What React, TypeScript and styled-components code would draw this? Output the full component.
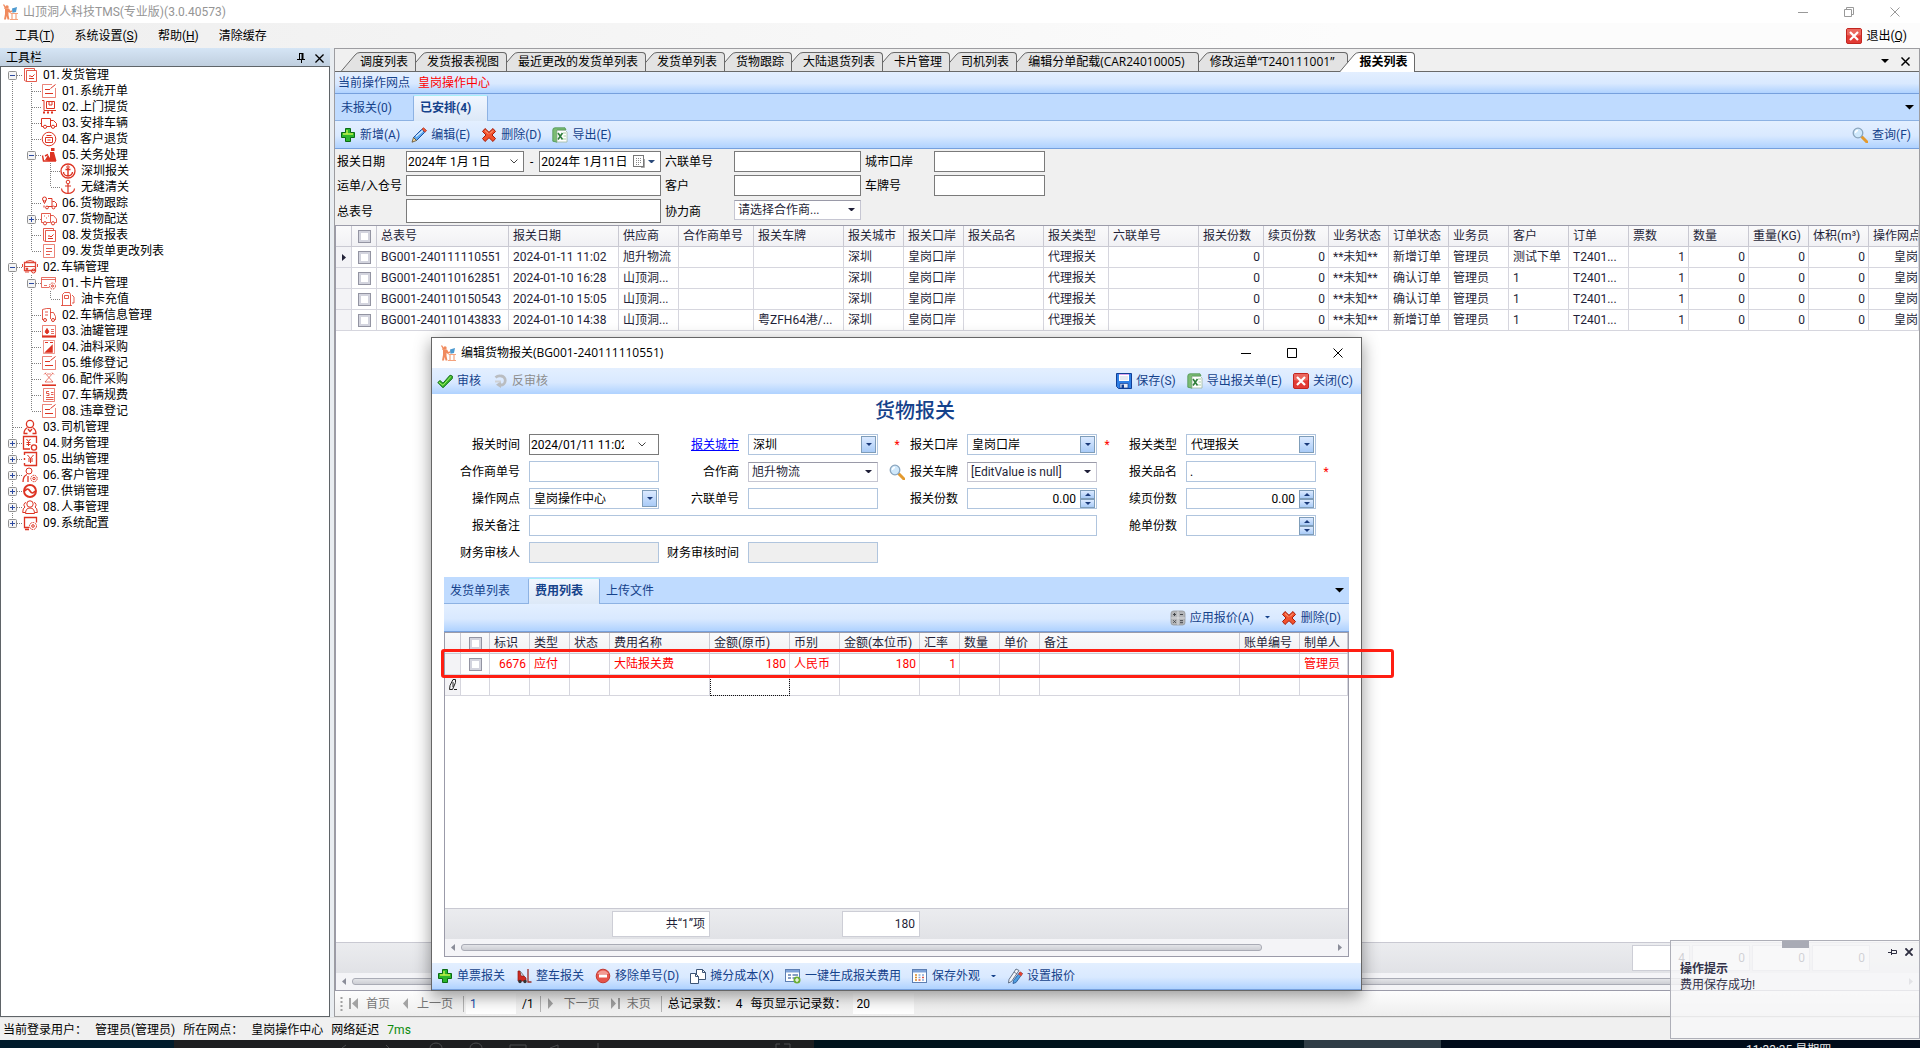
import React from "react";
import styled, { createGlobalStyle, css } from "styled-components";

const RED = "#dd3322";
const INK = "#1f1f38";
const BLUE = "#15428b";
const WIDE = '"Open Sans", "Noto Sans CJK SC", sans-serif';

const GlobalStyle = createGlobalStyle`
  * { box-sizing: border-box; }
  html, body, #root { height: 100%; }
  body {
    margin: 0;
    overflow: hidden;
    background: #f0f0f0;
    color: #000;
    font: 12px/16px Roboto, "Noto Sans CJK SC", sans-serif;
  }
  button, input, select {
    font: inherit;
    color: inherit;
    margin: 0;
    padding: 0;
    border: 0;
    background: none;
    border-radius: 0;
    outline: none;
  }
  h1, h2, h3, p, ul { margin: 0; padding: 0; font-size: 12px; font-weight: 400; }
  ul { list-style: none; }
  svg { display: block; flex: none; }
`;

/* ---------- icons ---------- */

type Drawing = { children: React.ReactNode; size?: number };
const Art = ({ children, size = 16 }: Drawing) => (
  <svg width={size} height={size} viewBox="0 0 16 16" fill="none" aria-hidden="true">
    {children}
  </svg>
);

const Logo = () => (
  <Art>
    <path d="M1.500.500L3 3v2M3 3.500h2" stroke="#f08a5d" strokeWidth="1.300" />
    <circle cx="5" cy="3" r="1.700" fill="#f08a5d" />
    <path d="M3 4.500h4L8.500 7l2-1 .5 1.200L8 9 6.500 8v3l1 4.500H5.500L4.700 12 4 15.500H2L3 10z" fill="#f08a5d" />
    <path d="M10 4.500l5-1.500-1 5-3.500.7z" fill="#4d9ad0" />
    <path d="M8.500 9.500H16M10 10v5M14 10v5M8 15.500h8" stroke="#f4a27d" strokeWidth="1.200" />
  </Art>
);
const Plus = () => (
  <Art>
    <path d="M5.500 1.500h5v4h4v5h-4v4h-5v-4h-4v-5h4z" fill="#2cb52c" stroke="#0b6b12" />
    <path d="M7 3v4H3M7 7h6" stroke="#c5f24a" strokeWidth="1.400" />
  </Art>
);
const Pencil = () => (
  <Art>
    <path d="M10.500 2.500l3 3-8 8-3-3z" fill="#5fa8ef" stroke="#1b4fa0" />
    <path d="M5 9.500l7-6" stroke="#d6ebff" strokeWidth="1.500" />
    <path d="M2.500 10.500l3 3-4.500 1.700z" fill="#f6d9a0" stroke="#5b4a2a" strokeWidth=".8" />
    <path d="M11 2l1.500-1.200 3 2.700L14 5.200z" fill="#ef5a3c" stroke="#b3321d" strokeWidth=".8" />
  </Art>
);
const Cross = () => (
  <Art>
    <path d="M4 1.500l4 3.800 4-3.800 2.500 3L11 8l3.500 3.500-2.500 3-4-3.800-4 3.800-2.500-3L5 8 1.500 4.500z" fill="#f2502c" stroke="#a81c08" />
    <path d="M4 3.500l3.500 3.300M12 3.500L9 6.500" stroke="#ffb08c" />
  </Art>
);
const Excel = () => (
  <Art>
    <path d="M.8 3Q.8.800 3 .8h10l1 2.200H5v12.200l-4.200-1z" fill="#7cbc74" stroke="#4b9450" strokeWidth=".8" />
    <path d="M5 3.500h8.500L15 5v10H5z" fill="#fff" stroke="#9fb7a0" strokeWidth=".8" />
    <path d="M11 6h3M11.500 9H14M11 12h3" stroke="#a5cfa1" />
    <path d="M6 6l4.500 6.500M10.500 6L6 12.500" stroke="#2e7d3a" strokeWidth="1.600" />
  </Art>
);
const Magnifier = () => (
  <Art>
    <path d="M10 10l5 5" stroke="#e39a2f" strokeWidth="3" strokeLinecap="round" />
    <circle cx="6" cy="6" r="4.800" fill="#cfe8fb" stroke="#8aa5bd" strokeWidth="1.300" />
    <path d="M3.500 6A2.500 2.500 0 0 1 6 3.500" stroke="#fff" strokeWidth="1.300" />
  </Art>
);
const CloseRed = () => (
  <Art>
    <rect x=".5" y=".5" width="15" height="15" rx="1.500" fill="#e23b35" stroke="#c22620" />
    <path d="M1 1h14v6Q8 9 1 7z" fill="#f07a70" opacity=".7" />
    <path d="M4 4l8 8M12 4l-8 8" stroke="#fff" strokeWidth="2.200" />
  </Art>
);
const Check = () => (
  <Art>
    <path d="M.8 9.500L3 7.500l3 2.700 7-8 2.300.8v2.500L6 14.800z" fill="#35b52b" stroke="#14701a" />
    <path d="M2 9.300l4 3 8-9" stroke="#a6ef62" />
  </Art>
);
const Redo = () => (
  <Art>
    <path d="M3.500 4.500Q6 2.300 9 3a4.500 4.500 0 0 1-.5 9" stroke="#babdc1" strokeWidth="2.800" />
    <path d="M9 8v7l-5-3.300z" fill="#babdc1" />
    <path d="M3 8.500h6" stroke="#cfd1d4" strokeWidth="2" />
  </Art>
);
const Save = () => (
  <Art>
    <path d="M.5.500h15v15h-13l-2-2z" fill="#2f7fe6" stroke="#123f96" />
    <path d="M3 1h10v7H3z" fill="#fff" />
    <path d="M3 1.500h10" stroke="#d9a2ee" />
    <path d="M4 4h8M4 6h8" stroke="#c9d2e4" />
    <path d="M4 10.500h8V15H4z" fill="#e8ecf5" stroke="#123f96" strokeWidth=".7" />
    <path d="M5.500 11.500h2.500V15H5.500z" fill="#123f96" />
  </Art>
);
const Calc = () => (
  <Art>
    <rect x="1" y="1" width="14" height="14" rx="2.500" fill="#b4b6b9" stroke="#8d9094" strokeWidth=".7" />
    <path d="M8 1v14M1 8h14" stroke="#e4e5e7" strokeWidth=".8" />
    <path d="M3 4.500h3M4.500 3v3M10 4.500h3M3.300 10.300l2.500 2.500M5.800 10.300l-2.500 2.500M10 10.700h3M10 12.700h3" stroke="#43464a" />
  </Art>
);
const Forklift = () => (
  <Art>
    <path d="M2 3h2l1 5h3l2 2v3H2z" fill="#cf2a22" stroke="#8a1812" strokeWidth=".7" />
    <circle cx="4" cy="13.500" r="1.700" fill="#333" />
    <circle cx="9" cy="13.500" r="1.700" fill="#333" />
    <path d="M12 1v13h3.500" stroke="#9b2d27" strokeWidth="1.300" />
    <path d="M4 3l4 5" stroke="#777" />
  </Art>
);
const Minus = () => (
  <Art>
    <circle cx="8" cy="8" r="6.800" fill="#e5534a" stroke="#c13a33" />
    <path d="M2.500 6a6 6 0 0 1 11 0z" fill="#f39a92" />
    <rect x="4" y="6.500" width="8" height="3" fill="#fff" />
  </Art>
);
const Copy = () => (
  <Art>
    <path d="M6.500 1.500h6l3 3v7h-9z" fill="#fff" stroke="#3c5475" />
    <path d="M12.500 1.500v3h3" stroke="#3c5475" />
    <path d="M.5 5.500h5l3 3v7h-8z" fill="#fff" stroke="#3c5475" />
    <path d="M5.500 5.500v3h3" stroke="#3c5475" />
  </Art>
);
const FormAdd = () => (
  <Art>
    <rect x=".5" y="1.500" width="14" height="12" fill="#fff" stroke="#5d7fb3" />
    <path d="M1 2h13v2.500H1z" fill="#7ea2d8" />
    <path d="M3 7h3M3 10h3M7.500 7H13M7.500 10H11" stroke="#5d7fb3" strokeWidth="1.300" />
    <circle cx="12" cy="12" r="3.500" fill="#6cae35" />
    <path d="M12 10v4M10 12h4" stroke="#fff" strokeWidth="1.200" />
  </Art>
);
const Layout = () => (
  <Art>
    <rect x=".5" y="1.500" width="14" height="13" fill="#fff" stroke="#5d7fb3" />
    <path d="M1 2h13v2.500H1z" fill="#7ea2d8" />
    <path d="M3 7h2M3 9.500h2M3 12h2" stroke="#d98b2b" strokeWidth="1.500" />
    <path d="M6.500 7h2M6.500 9.500h2M10 7h2M10 12h2" stroke="#88a8d6" strokeWidth="1.500" />
    <path d="M10 9.500h2M6.500 12h2" stroke="#d9564c" strokeWidth="1.500" />
  </Art>
);
const Pens = () => (
  <Art>
    <path d="M9 1l3 1.500-7.500 11-3 1.500.5-3.500z" fill="#f2f4f8" stroke="#56657c" strokeWidth=".9" />
    <path d="M7 4l3 2" stroke="#56657c" strokeWidth=".8" />
    <path d="M13 4l2.500 1.500-6.500 9L6 15.500l.5-3z" fill="#4f9fe0" stroke="#2c5c9a" strokeWidth=".9" />
    <path d="M13 3.500l2.800 2-1.600 2.800-3-2z" fill="#e2452f" />
  </Art>
);

const Caret = ({ w = 8, color = "#000" }: { w?: number; color?: string }) => (
  <svg width={w} height={w / 2} viewBox="0 0 8 4" aria-hidden="true">
    <path d="M0 0h8L4 4z" fill={color} />
  </svg>
);
const CaretUp = () => (
  <svg width="6" height="3" viewBox="0 0 6 3" aria-hidden="true">
    <path d="M0 3h6L3 0z" fill="#1a3a7a" />
  </svg>
);
const Chevron = () => (
  <svg width="8" height="5" viewBox="0 0 8 5" fill="none" stroke="#444" aria-hidden="true">
    <path d="M.5.500L4 4 7.500.500" />
  </svg>
);
const XMark = ({ size = 9, color = "#000", weight = 1 }: { size?: number; color?: string; weight?: number }) => (
  <svg width={size} height={size} viewBox="0 0 10 10" fill="none" stroke={color} strokeWidth={weight} aria-hidden="true">
    <path d="M.5.500l9 9M9.500.500l-9 9" />
  </svg>
);
const Pin = () => (
  <svg width="9" height="10" viewBox="0 0 9 10" fill="none" stroke="#000" aria-hidden="true">
    <path d="M2.500 0v6M2 .5h4M0 6.500h8M4.500 6v4" />
    <path d="M5.500 0v6" strokeWidth="2" />
  </svg>
);
const PinSide = () => (
  <svg width="9" height="8" viewBox="0 0 9 8" fill="none" stroke="#2e2e40" aria-hidden="true">
    <path d="M0 4.500h3M3.500 1v6M3 2.500h5.500v3H3" />
  </svg>
);
const Minimise = ({ color = "#000" }) => (
  <svg width="10" height="10" stroke={color} aria-hidden="true"><path d="M0 5.500h10" /></svg>
);
const Maximise = () => (
  <svg width="10" height="10" fill="none" stroke="#000" aria-hidden="true"><path d="M.5.500h9v9h-9z" /></svg>
);
const Restore = () => (
  <svg width="10" height="10" fill="none" stroke="#999" aria-hidden="true">
    <path d="M.5 2.500h7v7h-7zM2.500 2V.500h7v7H8" />
  </svg>
);

const treeArt: Record<string, React.ReactNode> = {
  report: <><path d="M2.500 1.500h10v2M2.500 1.500v12l2 1" opacity=".8" /><path d="M4.500 3.500h10v11h-10z" opacity=".8" /><path d="M7 9h2l1 1 2.500-2.500M7 11.500h5" /></>,
  form: <><path d="M11 1.500H1.500v13h13V5" opacity=".6" /><path d="M4 6.500h5M4 10.500h8M9.500 5.500l5-4" /></>,
  dolly: <><path d="M1 1.500h2v10h12" /><path d="M5.500 2.500h8v7h-8zM8 3v3h3V3" /><path d="M2 13.500h12" strokeDasharray="2 2" strokeWidth="2" /></>,
  truck: <><path d="M.5 3.500h9v8H6M2 11.500H.5v-8M9.500 5.500h3l3 3v3H14" /><circle cx="4" cy="11.800" r="1.600" /><circle cx="12" cy="11.800" r="1.600" /></>,
  returned: <><circle cx="8" cy="8" r="6.800" /><path d="M4.500 6.500h7v5h-7zM5.500 4.500h5M6.500 9h3" /></>,
  customs: <><path d="M10 1h3.500v3H10z" fill={RED} stroke="none" /><path d="M9 5h4l2.500 9H8l-4-1 3-5 2 3z" fill={RED} stroke="none" /><path d="M1.500 8.500l1 5.500H15" strokeWidth="1.400" /><path d="M4 9l3-1.500" strokeWidth="1.400" /></>,
  anchorRing: <><circle cx="8" cy="8" r="7" strokeWidth="1.300" /><circle cx="8" cy="4" r="1.200" /><path d="M8 5v8M5.500 6.500h5M3.500 9a4.500 4 0 0 0 9 0" strokeWidth="1.400" /></>,
  anchor: <><circle cx="8" cy="3" r="1.800" /><path d="M8 5v9.500M5 7h6M1.500 9.500a6.500 5 0 0 0 13 0" strokeWidth="1.200" /></>,
  truckPin: <><circle cx="3.500" cy="4" r="2" /><path d="M2 5.500l1.500 3 1.500-3M7 3.500h4v8H7M3 10.500v2M11.500 6.500h2l2 2v3H14" /><circle cx="6" cy="12.500" r="1.400" /><circle cx="12.500" cy="12.500" r="1.400" /></>,
  truckBox: <><path d="M.5 2.500h9v9H6M2 11.500H.5v-9M9.500 4.500h3l3 3.500v3.500H14M3 5h1M5 7h1M7 5h1" opacity=".8" /><circle cx="4" cy="12.300" r="1.600" /><circle cx="12" cy="12.300" r="1.600" /></>,
  doc: <><path d="M2.500 1.500h11v13h-11z" opacity=".6" /><path d="M5 5.500h6M5 8.500h6M5 11.500h4" opacity=".8" /></>,
  bus: <><path d="M2.500 3.500h11v8h-11z" strokeWidth="1.300" opacity=".9" /><path d="M3 7.500h10M4 2.500Q8 .5 12 2.500M.5 5v3M15.500 5v3M3 13h4" opacity=".9" /><circle cx="5" cy="9.800" r=".8" fill={RED} /><circle cx="11.500" cy="12" r="2" /></>,
  card: <><path d="M8 12.500H.5v-10h14v5M.5 4.500h14M3 10.500h3" opacity=".7" /><circle cx="11.500" cy="11" r="3" strokeDasharray="1.500 1" /><circle cx="11.500" cy="11" r="1" /></>,
  pump: <><path d="M2.500 14.500v-11l2-2h5l1 2v11M1 14.500h11" opacity=".8" /><path d="M4.500 4.500h4v3h-4zM12 4l2 2v6h-2" opacity=".8" /></>,
  truckInfo: <><path d="M1.500 13V2.500l4-1h4V12M9.500 5.500h3l2 4v3.500M4 5h3M4 8h3" opacity=".8" /><circle cx="4" cy="13" r="1.500" /><circle cx="12" cy="13" r="1.500" /></>,
  tank: <><path d="M1.500 2.500h13v11h-13z" opacity=".6" /><path d="M1 13.500h14" strokeWidth="2.200" /><path d="M6 5.500l1.500 2.500a1.700 1.700 0 1 1-3 0z" fill={RED} /><path d="M10 6.500h3M10 8.500h3M10 10.500h3" opacity=".7" /></>,
  fuel: <><path d="M2.500 1.500h11v13h-11z" opacity=".5" /><path d="M5 13l6-6v6z" fill={RED} strokeWidth="1.500" /><path d="M4 3.500h3M9 3.500h3" /></>,
  tools: <><path d="M4 2l8 9M12 2l-8 9M3 3.500l2-2M11 1.500l2 2M6 3h4M4 11h8" opacity=".6" /><path d="M1 14.200h14" strokeWidth="1.600" /></>,
  fee: <><path d="M2.500 1.500h11v13h-11z" opacity=".6" /><path d="M8 4.500H5.500v2H8v2H5.500M10 5.500h2.500M10 7.500h2.500M5 10.500h7.500M5 12.500h7.500" opacity=".8" /></>,
  user: <><circle cx="8" cy="5" r="3.600" strokeWidth="1.300" /><path d="M2 14.500q0-4 3.500-6M14 14.500q0-4-3.500-6M1.500 14.500h4M10.500 14.500h4M6 10l2 2.500 2-2.500" strokeWidth="1.300" /></>,
  money: <><path d="M8 14H1.500V1.500h13V8" strokeWidth="1.300" /><path d="M4.500 4l2 2.500L8.500 4M6.500 6.500V11M4.500 7.500h4M4.500 9.500h4" /><circle cx="12" cy="12.500" r="2.600" strokeWidth="1.300" /></>,
  yen: <><path d="M2.500 14.500V12M2.500 9V7M2.500 4V1.500h12v13h-12" strokeWidth="1.400" /><path d="M5.500 4l3 3.500 3-3.500M8.500 7.500V12M6 8h5M6 10h5" /></>,
  client: <><circle cx="7" cy="4" r="3" /><path d="M1 15q0-6 4-7.500M6 9v6" strokeWidth="1.300" /><circle cx="12" cy="11.500" r="3.200" strokeDasharray="1.500 .7" /><circle cx="12" cy="11.500" r="1.200" /></>,
  link: <><circle cx="8" cy="8" r="6" strokeWidth="1.900" /><path d="M3 8q2.500-4 5 0t5 0" strokeWidth="1.700" /></>,
  staff: <><circle cx="8" cy="5" r="3.200" /><path d="M3.500 14.500q0-5.500 4.500-5.500t4.500 5.500zM4 3.500A2.500 2.500 0 0 0 3 8Q.7 9 .7 13.500H3M12 3.500A2.500 2.500 0 0 1 13 8q2.300 1 2.300 5.500H13" /></>,
  config: <><path d="M7 12.500H2.500v-10h12v5M3 14.500h4" strokeWidth="1.300" /><circle cx="11" cy="11" r="3.500" strokeDasharray="1.800 .8" /><circle cx="11" cy="11" r="1.300" /></>,
};
const TreeIcon = ({ name }: { name: string }) => (
  <Art><g stroke={RED}>{treeArt[name]}</g></Art>
);

/* ---------- shared pieces ---------- */

const Spacer = styled.span`flex: 1;`;

const Strip = styled.div<{ $h: number; $line?: boolean; $text?: boolean }>`
  display: flex;
  align-items: center;
  flex: none;
  gap: ${(p) => (p.$text ? 8 : 11)}px;
  height: ${(p) => p.$h}px;
  padding: 0 8px 0 ${(p) => (p.$text ? 3 : 5)}px;
  background: linear-gradient(#e3efff 0%, #d9e9ff 55%, #afd2ff 100%);
  border-bottom: ${(p) => (p.$line ? "1px solid #76a0dd" : "0")};
  color: ${BLUE};
`;

const ToolBtn = styled.button`
  display: flex;
  align-items: center;
  gap: 4px;
  white-space: nowrap;
  &:disabled { color: #8d8d8d; }
`;

const SubTabs = styled.div`
  display: flex;
  flex: none;
  height: 27px;
  padding-top: 1px;
  background: #bfdbff;
  border-bottom: 1px solid #8db2e3;
  color: ${BLUE};
`;
const SubTab = styled.button<{ $on?: boolean }>`
  min-width: 78px;
  padding: 0 18px 0 6px;
  height: 25px;
  text-align: left;
  ${(p) =>
    p.$on &&
    css`
      min-width: 0;
      height: 26px;
      padding: 0 16px 2px 6px;
      font-weight: 700;
      border: 1px solid #8db2e3;
      border-top-color: #a5eef8;
      border-bottom: 0;
      border-radius: 2px 2px 0 0;
      background: linear-gradient(#f0f6ff, #dce8f7);
    `}
`;
const CaretButton = styled.button`
  margin-left: auto;
  padding: 0 5px;
`;

const DataGrid = styled.table`
  width: 100%;
  table-layout: fixed;
  border-spacing: 0;
  border-collapse: separate;
  color: ${INK};
`;
const Th = styled.th`
  height: 21px;
  padding: 0 4px;
  text-align: left;
  font-weight: 400;
  white-space: nowrap;
  overflow: hidden;
  border-right: 1px solid #c9c9d2;
  border-bottom: 1px solid #c9c9d2;
  background: linear-gradient(#fafafb, #f1f1f4);
`;
const Td = styled.td<{ $align?: string; $shade?: boolean; $inset?: boolean; $focus?: boolean }>`
  height: 21px;
  padding: 0 3px 0 ${(p) => (p.$inset ? 25 : 4)}px;
  text-align: ${(p) => p.$align || "left"};
  white-space: nowrap;
  overflow: hidden;
  border-right: 1px solid #d6d6de;
  border-bottom: 1px solid #d6d6de;
  background: ${(p) => (p.$shade ? "#f3f3f6" : "#fff")};
  outline: ${(p) => (p.$focus ? "1px dotted #111" : "none")};
  outline-offset: -1px;
  svg { margin: 0 auto; }
`;
const GridRow = styled.tr<{ $red?: boolean }>`
  color: ${(p) => (p.$red ? "#f00" : "inherit")};
`;
const Tick = styled.input`
  appearance: none;
  display: block;
  width: 13px;
  height: 13px;
  margin: 0 auto;
  border: 1px solid #9394a2;
  background: #fff;
  box-shadow: inset 0 0 0 2px #d3d4de;
`;
const SummaryBar = styled.div`
  flex: none;
  height: 31px;
  border-top: 1px solid #c9c9d2;
  background: linear-gradient(#ebecef, #e1e2e6);
  color: ${INK};
`;
const SummaryBox = styled.output`
  display: flex;
  align-items: center;
  justify-content: flex-end;
  height: 26px;
  padding: 0 4px;
  border: 1px solid #cdced6;
  background: #fff;
`;
const ScrollTrack = styled.div`
  display: flex;
  align-items: center;
  flex: none;
  gap: 6px;
  height: 17px;
  padding: 0 6px;
  background: #f4f4f7;
`;
const ThumbLane = styled.div`flex: 1;`;
const Thumb = styled.div<{ $w: number }>`
  width: ${(p) => p.$w}%;
  height: 7px;
  border: 1px solid #a9abb5;
  border-radius: 3px;
  background: linear-gradient(#e3e4e8, #cdced4);
`;
const ScrollBar = ({ w }: { w: number }) => (
  <ScrollTrack>
    <svg width="4" height="7"><path d="M4 0v7L0 3.500z" fill="#8b8d99" /></svg>
    <ThumbLane><Thumb $w={w} /></ThumbLane>
    <svg width="4" height="7"><path d="M0 0v7l4-3.500z" fill="#8b8d99" /></svg>
  </ScrollTrack>
);

/* ---------- window chrome ---------- */

const Screen = styled.div`
  display: flex;
  flex-direction: column;
  height: 100vh;
`;
const TitleBar = styled.header<{ $h: number; $muted?: boolean }>`
  display: flex;
  align-items: center;
  flex: none;
  height: ${(p) => p.$h}px;
  padding: ${(p) => (p.$muted ? "0 2px 0 2px" : "0 0 0 8px")};
  gap: 5px;
  background: #fff;
  font-family: ${(p) => (p.$muted ? "inherit" : WIDE)};
  color: ${(p) => (p.$muted ? "#959595" : "#000")};
`;
const WindowButtons = styled.div`
  display: flex;
  align-self: stretch;
  margin-left: auto;
`;
const WindowButton = styled.button`
  display: grid;
  place-items: center;
  width: 46px;
`;
const MenuBar = styled.nav`
  display: flex;
  align-items: center;
  flex: none;
  gap: 20px;
  height: 25px;
  padding: 0 13px 0 15px;
  background: linear-gradient(90deg, #efefef, #fcfcfc 70%);
`;
const Workspace = styled.div`
  display: flex;
  flex: 1;
  min-height: 0;
  gap: 4px;
  background: #e9edf1;
`;

/* ---------- tree ---------- */

const SidePanel = styled.aside`
  display: flex;
  flex-direction: column;
  flex: none;
  width: 330px;
`;
const PanelHead = styled.div`
  display: flex;
  align-items: center;
  gap: 9px;
  height: 18px;
  padding: 2px 6px 0 6px;
  background: linear-gradient(#d5e5f5, #c0cfdf);
`;
const TreeBox = styled.ul`
  flex: 1;
  min-height: 0;
  overflow: hidden;
  padding-left: 2px;
  border: 1px solid #5f6468;
  background: #fff;
`;
const TreeRow = styled.li`
  display: flex;
  align-items: center;
  height: 16px;
`;
const TreeLabel = styled.span`
  display: flex;
  margin-left: 5px;
  white-space: nowrap;
`;
const TreeNo = styled.span`width: 18px;`;

type Node = [depth: number, icon: string, no: string, text: string, box?: "+" | "-"];
const tree: Node[] = [
  [0, "report", "01.", "发货管理", "-"],
  [1, "form", "01.", "系统开单"],
  [1, "dolly", "02.", "上门提货"],
  [1, "truck", "03.", "安排车辆"],
  [1, "returned", "04.", "客户退货"],
  [1, "customs", "05.", "关务处理", "-"],
  [2, "anchorRing", "", "深圳报关"],
  [2, "anchor", "", "无缝清关"],
  [1, "truckPin", "06.", "货物跟踪"],
  [1, "truckBox", "07.", "货物配送", "+"],
  [1, "report", "08.", "发货报表"],
  [1, "doc", "09.", "发货单更改列表"],
  [0, "bus", "02.", "车辆管理", "-"],
  [1, "card", "01.", "卡片管理", "-"],
  [2, "pump", "", "油卡充值"],
  [1, "truckInfo", "02.", "车辆信息管理"],
  [1, "tank", "03.", "油罐管理"],
  [1, "fuel", "04.", "油料采购"],
  [1, "form", "05.", "维修登记"],
  [1, "tools", "06.", "配件采购"],
  [1, "fee", "07.", "车辆规费"],
  [1, "form", "08.", "违章登记"],
  [0, "user", "03.", "司机管理"],
  [0, "money", "04.", "财务管理", "+"],
  [0, "yen", "05.", "出纳管理", "+"],
  [0, "client", "06.", "客户管理", "+"],
  [0, "link", "07.", "供销管理", "+"],
  [0, "staff", "08.", "人事管理", "+"],
  [0, "config", "09.", "系统配置", "+"],
];

/** True when a later sibling at `depth` exists below row `i`. */
const continues = (i: number, depth: number) => {
  for (let j = i + 1; j < tree.length; j++) {
    if (tree[j][0] < depth) return false;
    if (tree[j][0] === depth) return true;
  }
  return false;
};

const Guide = ({ row, depth }: { row: number; depth: number }) => {
  const own = tree[row][0] === depth;
  const more = continues(row, depth);
  const box = own ? tree[row][4] : undefined;
  const first = row === 0 && depth === 0;
  return (
    <svg width="19" height="16" fill="none" aria-hidden="true">
      <g stroke="#808080" strokeDasharray="1 1">
        {(own || more) && <path d={`M9.500 ${first ? 8 : 0}V${more ? 16 : 8}`} />}
        {own && <path d="M10 8.500h9" />}
      </g>
      {box && (
        <>
          <rect x="5.500" y="4.500" width="8" height="8" rx="1" fill="#f4f4f4" stroke="#919191" />
          <path d={box === "+" ? "M7 8.500h5M9.500 6v5" : "M7 8.500h5"} stroke="#2c4aa0" />
        </>
      )}
    </svg>
  );
};

const ToolTree = () => (
  <SidePanel>
    <PanelHead>
      <h2>工具栏</h2>
      <Spacer />
      <button aria-label="固定"><Pin /></button>
      <button aria-label="关闭工具栏"><XMark weight={1.500} /></button>
    </PanelHead>
    <TreeBox>
      {tree.map(([depth, icon, no, text], i) => (
        <TreeRow key={i}>
          {Array.from({ length: depth + 1 }, (_, d) => <Guide key={d} row={i} depth={d} />)}
          <TreeIcon name={icon} />
          <TreeLabel>{no && <TreeNo>{no}</TreeNo>}{text}</TreeLabel>
        </TreeRow>
      ))}
    </TreeBox>
  </SidePanel>
);

/* ---------- document area ---------- */

const DocArea = styled.main`
  display: flex;
  flex-direction: column;
  flex: 1;
  min-width: 0;
  border: 1px solid #9d9da1;
  border-bottom-color: #a0a0a0;
  background: #f0f0f0;
`;
const DocTabs = styled.div`
  display: flex;
  align-items: flex-end;
  flex: none;
  height: 23px;
  padding-left: 14px;
  border-bottom: 1px solid #696969;
`;
const DocTab = styled.button<{ $z: number; $on?: boolean }>`
  position: relative;
  z-index: ${(p) => p.$z};
  display: flex;
  flex: none;
  height: ${(p) => (p.$on ? 20 : 19)}px;
  margin-left: -8px;
  margin-bottom: ${(p) => (p.$on ? -1 : 0)}px;
  font-family: ${WIDE};
  font-weight: ${(p) => (p.$on ? 700 : 400)};
`;
const DocTabFace = styled.span<{ $on?: boolean; $roomy?: boolean }>`
  height: 100%;
  padding: 1px ${(p) => (p.$roomy ? 13 : 7)}px 0 0;
  white-space: nowrap;
  border: solid #696969;
  border-width: 1px 1px 0 0;
  border-radius: 0 4px 0 0;
  background: ${(p) => (p.$on ? "#fff" : "#e3e3e3")};
`;
const TabSlope = ({ on }: { on: boolean }) => (
  <svg width="19" height={on ? 20 : 19} aria-hidden="true">
    <path d="M0 20L14 3Q16 0 19 0V20z" fill={on ? "#fff" : "#e3e3e3"} />
    <path d="M0 19.500L14 3Q16 .5 19 .5" fill="none" stroke="#696969" />
  </svg>
);
const DocTabTools = styled.div`
  display: flex;
  align-items: center;
  align-self: center;
  gap: 12px;
  margin-left: auto;
  padding: 2px 9px 0 0;
`;
const docTabs = [
  "调度列表", "发货报表视图", "最近更改的发货单列表", "发货单列表", "货物跟踪", "大陆退货列表",
  "卡片管理", "司机列表", "编辑分单配载(CAR24010005)", "修改运单“T240111001”", "报关列表",
];

const Site = styled.span`color: #f00;`;

const Filters = styled.form`
  display: grid;
  grid-template-columns: 71px 255px 73px 127px 73px 111px;
  grid-auto-rows: 24px;
  flex: none;
  padding: 2px 0;
`;
const FilterLabel = styled.label<{ $lead?: boolean; $low?: boolean }>`
  padding: ${(p) => (p.$low ? 5 : 3)}px 0 0 ${(p) => (p.$lead ? 2 : 4)}px;
  white-space: nowrap;
`;
const FilterCell = styled.div<{ $tall?: boolean }>`
  display: flex;
  align-items: center;
  gap: 6px;
  height: ${(p) => (p.$tall ? 24 : 21)}px;
`;
const GreyInput = styled.input`
  flex: 1;
  min-width: 0;
  height: 100%;
  padding: 0 2px;
  border: 1px solid #7a7a7a;
  background: #fff;
`;
const DateBox = styled.span<{ $w?: number }>`
  display: flex;
  align-items: center;
  gap: 3px;
  width: ${(p) => (p.$w ? p.$w + "px" : "auto")};
  flex: ${(p) => (p.$w ? "none" : 1)};
  min-width: 0;
  height: 21px;
  padding: 0 5px 0 1px;
  border: 1px solid #7a7a7a;
  background: #fff;
`;
const DateText = styled.input`
  flex: 1;
  min-width: 0;
`;
const SoftSelectBox = styled.span`
  display: flex;
  align-items: center;
  flex: 1;
  height: 20px;
  padding: 0 5px 0 3px;
  border: 1px solid #c6c6d2;
  border-top-color: #9a9aa8;
  background: #fff;
  color: ${INK};
`;
const BareSelect = styled.select`
  appearance: none;
  flex: 1;
  min-width: 0;
  height: 100%;
`;
const Calendar = () => (
  <svg width="12" height="13" aria-hidden="true">
    <rect x=".5" y=".5" width="10" height="11" fill="#fff" stroke="#777" />
    <path d="M3 3.500h6M3 5.500h6M3 7.500h6M3 9.500h4" stroke="#888" strokeDasharray="1 1" />
    <path d="M8 12.500h3.500V4" stroke="#aaa" fill="none" />
  </svg>
);

const GridHost = styled.section`
  display: flex;
  flex-direction: column;
  flex: 1;
  min-height: 0;
  overflow: hidden;
  border: 1px solid #9b9ba9;
  border-right-width: 0;
  background: #fff;
`;
const GridBody = styled.div`
  flex: 1;
  min-height: 0;
  overflow: hidden;
`;
const MainSummary = styled(SummaryBar)`
  display: flex;
  justify-content: flex-end;
  gap: 2px;
  padding: 2px 49px 0 0;
  & > output { width: 58px; }
`;

const mainCols: [string, number][] = [
  ["", 16], ["#", 25], ["总表号", 132], ["报关日期", 110], ["供应商", 60], ["合作商单号", 75],
  ["报关车牌", 90], ["报关城市", 60], ["报关口岸", 60], ["报关品名", 80], ["报关类型", 65],
  ["六联单号", 90], ["报关份数", 65], ["续页份数", 65], ["业务状态", 60], ["订单状态", 60],
  ["业务员", 60], ["客户", 60], ["订单", 60], ["票数", 60], ["数量", 60], ["重量(KG)", 60],
  ["体积(m³)", 60], ["操作网点", 0],
];
const rightCols = new Set(["报关份数", "续页份数", "票数", "数量", "重量(KG)", "体积(m³)"]);
const line = (no: string, date: string, vendor: string, plate: string, state: string, client: string) => [
  no, date, vendor, "", plate, "深圳", "皇岗口岸", "", "代理报关", "", "0", "0", "**未知**", state,
  "管理员", client, "T2401...", "1", "0", "0", "0", "皇岗操作中心",
];
const mainRows = [
  line("BG001-240111110551", "2024-01-11 11:02", "旭升物流", "", "新增订单", "测试下单"),
  line("BG001-240110162851", "2024-01-10 16:28", "山顶洞...", "", "确认订单", "1"),
  line("BG001-240110150543", "2024-01-10 15:05", "山顶洞...", "", "确认订单", "1"),
  line("BG001-240110143833", "2024-01-10 14:38", "山顶洞...", "粤ZFH64港/...", "新增订单", "1"),
];

const MainGrid = () => (
  <DataGrid>
    <colgroup>
      {mainCols.map(([name, w]) => <col key={name} style={w ? { width: w } : undefined} />)}
    </colgroup>
    <thead>
      <tr>
        {mainCols.map(([name]) => (
          <Th key={name}>{name === "#" ? <Tick type="checkbox" aria-label="全选" /> : name}</Th>
        ))}
      </tr>
    </thead>
    <tbody>
      {mainRows.map((cells, r) => (
        <GridRow key={r}>
          <Td $shade>
            {r === 0 && <svg width="4" height="7"><path d="M0 0v7l4-3.500z" fill="#222238" /></svg>}
          </Td>
          <Td><Tick type="checkbox" aria-label={cells[0]} /></Td>
          {cells.map((text, c) => {
            const name = mainCols[c + 2][0];
            return (
              <Td key={c} $align={rightCols.has(name) ? "right" : "left"} $inset={name === "操作网点"}>
                {text}
              </Td>
            );
          })}
        </GridRow>
      ))}
    </tbody>
  </DataGrid>
);

/* ---------- pager & status ---------- */

const Pager = styled.footer`
  display: flex;
  align-items: center;
  flex: none;
  gap: 6px;
  height: 25px;
  padding-left: 5px;
  background: linear-gradient(#fdfdfd, #eeeeee);
`;
const PageBtn = styled.button`
  display: flex;
  align-items: center;
  gap: 7px;
  padding-right: 4px;
  color: #777;
`;
const Rule = styled.span`
  width: 1px;
  height: 16px;
  background: #b5b5b5;
`;
const PageField = styled.input<{ $w: number; $snug?: boolean }>`
  width: ${(p) => p.$w}px;
  height: 21px;
  padding: 0 4px;
  margin-left: ${(p) => (p.$snug ? -4 : 0)}px;
  background: #fff;
  color: ${(p) => (p.$snug ? "#1a4fae" : "#000")};
`;
const Total = styled.span`padding: 0 2px;`;
const Nav = ({ d }: { d: string }) => (
  <svg width="10" height="11" fill="#a3a3a3" aria-hidden="true"><path d={d} /></svg>
);
const Grip = () => (
  <svg width="3" height="16" aria-hidden="true"><path d="M1.500 1v15" stroke="#a0a0a0" strokeWidth="2" strokeDasharray="2 2" /></svg>
);

const StatusBar = styled.footer`
  display: flex;
  align-items: center;
  flex: none;
  gap: 8px;
  height: 23px;
  padding: 1px 0 0 3px;
  background: #f0f0f0;
  border-top: 1px solid #e2e2e2;
`;
const Latency = styled.span`color: #0a8a0a;`;

const TaskBar = styled.div`
  display: flex;
  flex: none;
  height: 8px;
  overflow: hidden;
  background: #000d1c;
  color: #e8e8e8;
`;
const TaskSlot = styled.div<{ $share: number; $bg: string }>`
  flex: ${(p) => p.$share} 0 0;
  overflow: hidden;
  background: ${(p) => p.$bg};
`;
const Clock = styled.time`
  display: block;
  padding: 2px 0 0 305px;
  white-space: nowrap;
`;

/* ---------- dialog ---------- */

const Dialog = styled.section`
  position: absolute;
  z-index: 20;
  left: 431px;
  top: 337px;
  bottom: 57px;
  width: 931px;
  display: flex;
  flex-direction: column;
  border: 1px solid #666;
  background: #fff;
  box-shadow: 0 5px 16px rgba(0, 0, 0, 0.42);
`;
const DialogTitle = styled.h1`
  flex: none;
  padding: 4px 0 0 37px;
  font-size: 20px;
  line-height: 26px;
  font-weight: 500;
  color: ${BLUE};
  text-align: center;
`;
const Form = styled.form`
  display: grid;
  grid-template-columns: 97px 130px 89px 130px 89px 130px 89px 130px 1fr;
  grid-auto-rows: 21px;
  row-gap: 6px;
  flex: none;
  padding: 10px 0 14px;
`;
const FormLabelCell = styled.div<{ $near?: boolean }>`
  display: flex;
  align-items: center;
  justify-content: flex-end;
  padding: 0 9px 0 ${(p) => (p.$near ? 2 : 11)}px;
  white-space: nowrap;
`;
const Mark = styled.span`
  display: flex;
  justify-content: center;
  width: 16px;
  margin-right: auto;
  color: #f00;
`;
const CityLink = styled.a`
  color: #00f;
  text-decoration: underline;
`;
const Field = styled.span<{ $span?: number }>`
  display: flex;
  align-items: center;
  grid-column: span ${(p) => p.$span || 1};
  padding: 1px;
  border: 1px solid #b0c5de;
  background: #fff;
  &:has(:disabled) { background: #efefef; }
`;
const FieldInput = styled.input<{ $right?: boolean }>`
  flex: 1;
  min-width: 0;
  padding: 0 4px 0 2px;
  text-align: ${(p) => (p.$right ? "right" : "left")};
`;
const FieldSelect = styled(BareSelect)`padding-left: 3px;`;
const faceBlue = css`
  display: grid;
  place-items: center;
  border: 1px solid #7f9db9;
  background: linear-gradient(#dceaff, #a9cbf7);
`;
const DropFace = styled.span`
  ${faceBlue}
  width: 15px;
  height: 17px;
`;
const Spin = styled.span`
  display: grid;
  grid-template-rows: 1fr 1fr;
  width: 15px;
  height: 18px;
`;
const SpinBtn = styled.button`${faceBlue}`;
const FormSelectBox = styled(SoftSelectBox)`height: 20px; align-self: center;`;
const FormDate = styled(DateBox)`width: 100%; padding-right: 12px; gap: 14px;`;

const Label = ({ id, text, mark, near }: { id: string; text: string; mark?: React.ReactNode; near?: boolean }) => (
  <FormLabelCell $near={near}>
    {mark && <Mark>{mark}</Mark>}
    <label htmlFor={id}>{text}</label>
  </FormLabelCell>
);
const Text = ({ id, value = "", span, disabled }: { id: string; value?: string; span?: number; disabled?: boolean }) => (
  <Field $span={span}><FieldInput id={id} defaultValue={value} disabled={disabled} /></Field>
);
const Combo = ({ id, value }: { id: string; value: string }) => (
  <Field>
    <FieldSelect id={id}><option>{value}</option></FieldSelect>
    <DropFace><Caret w={6} color="#1a3a7a" /></DropFace>
  </Field>
);
const NumberField = ({ id, value = "" }: { id: string; value?: string }) => (
  <Field>
    <FieldInput id={id} defaultValue={value} $right />
    <Spin>
      <SpinBtn type="button" aria-label="增加"><CaretUp /></SpinBtn>
      <SpinBtn type="button" aria-label="减少"><Caret w={6} color="#1a3a7a" /></SpinBtn>
    </Spin>
  </Field>
);
const SoftCombo = ({ id, value }: { id: string; value: string }) => (
  <FormSelectBox>
    <BareSelect id={id}><option>{value}</option></BareSelect>
    <Caret w={7} color={INK} />
  </FormSelectBox>
);

const FeePane = styled.div`
  display: flex;
  flex-direction: column;
  flex: 1;
  min-height: 0;
  margin: 0 12px 6px;
`;
const FeeHost = styled(GridHost)`border-right-width: 1px;`;
const FeeSummary = styled(SummaryBar)`
  display: grid;
  grid-template-columns: 98px 78px;
  column-gap: 132px;
  padding: 2px 0 0 167px;
`;
const feeCols: [string, number][] = [
  ["", 16], ["#", 29], ["标识", 40], ["类型", 40], ["状态", 40], ["费用名称", 100], ["金额(原币)", 80],
  ["币别", 50], ["金额(本位币)", 80], ["汇率", 40], ["数量", 40], ["单价", 40], ["备注", 200],
  ["账单编号", 60], ["制单人", 0],
];
const feeRight = new Set(["标识", "金额(原币)", "金额(本位币)", "汇率"]);
const feeRow = ["6676", "应付", "", "大陆报关费", "180", "人民币", "180", "1", "", "", "", "", "管理员"];

const Callout = styled.div`
  position: absolute;
  z-index: 30;
  left: 441px;
  top: 649px;
  width: 953px;
  height: 29px;
  border: 3px solid #ff1e12;
  border-radius: 3px;
  pointer-events: none;
`;

const CustomsDialog = () => (
  <Dialog role="dialog" aria-label="编辑货物报关">
    <TitleBar $h={30}>
      <Logo />
      <h2>编辑货物报关(BG001-240111110551)</h2>
      <WindowButtons>
        <WindowButton aria-label="最小化"><Minimise /></WindowButton>
        <WindowButton aria-label="最大化"><Maximise /></WindowButton>
        <WindowButton aria-label="关闭窗口"><XMark size={10} /></WindowButton>
      </WindowButtons>
    </TitleBar>
    <Strip $h={26}>
      <ToolBtn><Check />审核</ToolBtn>
      <ToolBtn disabled><Redo />反审核</ToolBtn>
      <Spacer />
      <ToolBtn><Save />保存(S)</ToolBtn>
      <ToolBtn><Excel />导出报关单(E)</ToolBtn>
      <ToolBtn><CloseRed />关闭(C)</ToolBtn>
    </Strip>
    <DialogTitle>货物报关</DialogTitle>
    <Form>
      <Label id="time" text="报关时间" />
      <FormDate>
        <DateText id="time" defaultValue="2024/01/11 11:02" />
        <Chevron />
      </FormDate>
      <FormLabelCell><CityLink href="#city">报关城市</CityLink></FormLabelCell>
      <Field>
        <FieldSelect aria-label="报关城市"><option>深圳</option></FieldSelect>
        <DropFace><Caret w={6} color="#1a3a7a" /></DropFace>
      </Field>
      <Label id="port" text="报关口岸" mark="*" />
      <Combo id="port" value="皇岗口岸" />
      <Label id="kind" text="报关类型" mark="*" near />
      <Combo id="kind" value="代理报关" />
      <span />

      <Label id="partnerNo" text="合作商单号" />
      <Text id="partnerNo" />
      <Label id="partner" text="合作商" />
      <SoftCombo id="partner" value="旭升物流" />
      <Label id="plate" text="报关车牌" mark={<Magnifier />} />
      <SoftCombo id="plate" value="[EditValue is null]" />
      <Label id="goods" text="报关品名" />
      <Text id="goods" value="." />
      <FormLabelCell $near><Mark>*</Mark></FormLabelCell>

      <Label id="site" text="操作网点" />
      <Combo id="site" value="皇岗操作中心" />
      <Label id="six" text="六联单号" />
      <Text id="six" />
      <Label id="copies" text="报关份数" />
      <NumberField id="copies" value="0.00" />
      <Label id="extra" text="续页份数" />
      <NumberField id="extra" value="0.00" />
      <span />

      <Label id="memo" text="报关备注" />
      <Text id="memo" span={5} />
      <Label id="manifest" text="舱单份数" />
      <NumberField id="manifest" />
      <span />

      <Label id="auditor" text="财务审核人" />
      <Text id="auditor" disabled />
      <Label id="auditTime" text="财务审核时间" />
      <Text id="auditTime" disabled />
    </Form>
    <FeePane>
      <SubTabs>
        <SubTab>发货单列表</SubTab>
        <SubTab $on>费用列表</SubTab>
        <SubTab>上传文件</SubTab>
        <CaretButton aria-label="更多标签"><Caret w={9} /></CaretButton>
      </SubTabs>
      <Strip $h={28} $line>
        <Spacer />
        <ToolBtn><Calc />应用报价(A)</ToolBtn>
        <Caret w={5} color={BLUE} />
        <ToolBtn><Cross />删除(D)</ToolBtn>
      </Strip>
      <FeeHost>
        <GridBody>
          <DataGrid>
            <colgroup>
              {feeCols.map(([name, w]) => <col key={name} style={w ? { width: w } : undefined} />)}
            </colgroup>
            <thead>
              <tr>
                {feeCols.map(([name]) => (
                  <Th key={name}>{name === "#" ? <Tick type="checkbox" aria-label="全选费用" /> : name}</Th>
                ))}
              </tr>
            </thead>
            <tbody>
              <GridRow $red>
                <Td $shade />
                <Td><Tick type="checkbox" aria-label="6676" /></Td>
                {feeRow.map((text, c) => (
                  <Td key={c} $align={feeRight.has(feeCols[c + 2][0]) ? "right" : "left"}>{text}</Td>
                ))}
              </GridRow>
              <GridRow>
                <Td $shade>
                  <svg width="8" height="12" fill="none" stroke="#222" aria-hidden="true">
                    <path d="M4 .5h2.500v3l-3 7h-3l.5-4zM4 3v5M5 10.500h3" />
                  </svg>
                </Td>
                {feeCols.slice(1).map(([name]) => <Td key={name} $focus={name === "金额(原币)"} />)}
              </GridRow>
            </tbody>
          </DataGrid>
        </GridBody>
        <FeeSummary>
          <SummaryBox>共“1”项</SummaryBox>
          <SummaryBox>180</SummaryBox>
        </FeeSummary>
        <ScrollBar w={92} />
      </FeeHost>
    </FeePane>
    <Strip $h={27} $line>
      <ToolBtn><Plus />单票报关</ToolBtn>
      <ToolBtn><Forklift />整车报关</ToolBtn>
      <ToolBtn><Minus />移除单号(D)</ToolBtn>
      <ToolBtn><Copy />摊分成本(X)</ToolBtn>
      <ToolBtn><FormAdd />一键生成报关费用</ToolBtn>
      <ToolBtn><Layout />保存外观</ToolBtn>
      <Caret w={5} color={BLUE} />
      <ToolBtn><Pens />设置报价</ToolBtn>
    </Strip>
  </Dialog>
);

/* ---------- toast ---------- */

const Toast = styled.aside`
  position: absolute;
  z-index: 25;
  right: 0;
  bottom: 9px;
  width: 250px;
  height: 99px;
  padding: 0 9px;
  border: 1px solid #aeafb8;
  background: rgba(246, 246, 248, 0.82);
  color: #33334a;
`;
const ToastGrip = styled.div`
  width: 27px;
  height: 7px;
  margin: 0 auto;
  background: #a9abb5;
`;
const ToastTools = styled.div`
  display: flex;
  align-items: center;
  justify-content: flex-end;
  gap: 8px;
  height: 8px;
  margin-right: -3px;
`;
const ToastTitle = styled.h3`
  margin-top: 6px;
  line-height: 15px;
  font-weight: 700;
`;

export default function App() {
  return (
    <Screen>
      <GlobalStyle />
      <TitleBar $h={23} $muted>
        <Logo />
        <h2>山顶洞人科技TMS(专业版)(3.0.40573)</h2>
        <WindowButtons>
          <WindowButton aria-label="最小化"><Minimise color="#999" /></WindowButton>
          <WindowButton aria-label="还原"><Restore /></WindowButton>
          <WindowButton aria-label="关闭"><XMark size={10} color="#999" /></WindowButton>
        </WindowButtons>
      </TitleBar>
      <MenuBar>
        <button>工具(<u>T</u>)</button>
        <button>系统设置(<u>S</u>)</button>
        <button>帮助(<u>H</u>)</button>
        <button>清除缓存</button>
        <Spacer />
        <ToolBtn><CloseRed /><span>退出(<u>Q</u>)</span></ToolBtn>
      </MenuBar>

      <Workspace>
        <ToolTree />
        <DocArea>
          <DocTabs>
            {docTabs.map((name, i) => {
              const on = i === docTabs.length - 1;
              return (
                <DocTab key={name} $on={on} $z={on ? 12 : docTabs.length - i}>
                  <TabSlope on={on} />
                  <DocTabFace $on={on} $roomy={/\d/.test(name)}>{name}</DocTabFace>
                </DocTab>
              );
            })}
            <DocTabTools>
              <button aria-label="窗口列表"><Caret w={8} /></button>
              <button aria-label="关闭标签"><XMark weight={1.600} /></button>
            </DocTabTools>
          </DocTabs>
          <Strip $h={22} $line $text>
            <span>当前操作网点</span>
            <Site>皇岗操作中心</Site>
          </Strip>
          <SubTabs>
            <SubTab>未报关(0)</SubTab>
            <SubTab $on>已安排(4)</SubTab>
            <CaretButton aria-label="更多标签"><Caret w={9} /></CaretButton>
          </SubTabs>
          <Strip $h={28} $line>
            <ToolBtn><Plus />新增(A)</ToolBtn>
            <ToolBtn><Pencil />编辑(E)</ToolBtn>
            <ToolBtn><Cross />删除(D)</ToolBtn>
            <ToolBtn><Excel />导出(E)</ToolBtn>
            <Spacer />
            <ToolBtn><Magnifier />查询(F)</ToolBtn>
          </Strip>

          <Filters>
            <FilterLabel $lead htmlFor="from">报关日期</FilterLabel>
            <FilterCell>
              <DateBox $w={118}>
                <DateText id="from" defaultValue="2024年 1月 1日" />
                <Chevron />
              </DateBox>
              <span>-</span>
              <DateBox>
                <DateText aria-label="截止日期" defaultValue="2024年 1月11日" />
                <Calendar />
                <Caret w={7} color="#2b4a7a" />
              </DateBox>
            </FilterCell>
            <FilterLabel htmlFor="fSix">六联单号</FilterLabel>
            <FilterCell><GreyInput id="fSix" /></FilterCell>
            <FilterLabel htmlFor="fPort">城市口岸</FilterLabel>
            <FilterCell><GreyInput id="fPort" /></FilterCell>

            <FilterLabel $lead htmlFor="fWay">运单/入仓号</FilterLabel>
            <FilterCell><GreyInput id="fWay" /></FilterCell>
            <FilterLabel htmlFor="fClient">客户</FilterLabel>
            <FilterCell><GreyInput id="fClient" /></FilterCell>
            <FilterLabel htmlFor="fPlate">车牌号</FilterLabel>
            <FilterCell><GreyInput id="fPlate" /></FilterCell>

            <FilterLabel $lead $low htmlFor="fTotal">总表号</FilterLabel>
            <FilterCell $tall><GreyInput id="fTotal" /></FilterCell>
            <FilterLabel $low htmlFor="fPartner">协力商</FilterLabel>
            <FilterCell>
              <SoftSelectBox>
                <BareSelect id="fPartner"><option>请选择合作商...</option></BareSelect>
                <Caret w={7} color={INK} />
              </SoftSelectBox>
            </FilterCell>
          </Filters>

          <GridHost>
            <GridBody><MainGrid /></GridBody>
            <MainSummary>
              <SummaryBox>4</SummaryBox>
              <SummaryBox>0</SummaryBox>
              <SummaryBox>0</SummaryBox>
              <SummaryBox>0</SummaryBox>
            </MainSummary>
            <ScrollBar w={88} />
          </GridHost>

          <Pager>
            <Grip />
            <PageBtn><Nav d="M0 0h2v11H0zM9 0v11L3 5.500z" />首页</PageBtn>
            <PageBtn><Nav d="M8 0v11L3 5.500z" />上一页</PageBtn>
            <Rule />
            <PageField aria-label="页码" defaultValue="1" $w={50} $snug />
            <span>/1</span>
            <Rule />
            <PageBtn><Nav d="M1 0v11l5-5.500z" />下一页</PageBtn>
            <PageBtn><Nav d="M1 0v11l5-5.500zM8 0h2v11H8z" />末页</PageBtn>
            <Rule />
            <span>总记录数：</span>
            <Total>4</Total>
            <label htmlFor="perPage">每页显示记录数：</label>
            <PageField id="perPage" defaultValue="20" $w={61} />
          </Pager>
        </DocArea>
      </Workspace>

      <StatusBar>
        <span>当前登录用户：</span>
        <span>管理员(管理员)</span>
        <span>所在网点：</span>
        <span>皇岗操作中心</span>
        <span>网络延迟</span>
        <Latency>7ms</Latency>
      </StatusBar>
      <TaskBar>
        <TaskSlot $share={174} $bg="#001b2b" />
        <TaskSlot $share={640} $bg="#1d1e20">
          <svg width="640" height="8" fill="none" stroke="#4a4b4d" aria-hidden="true">
            <path d="M168 8l4-3M212 5l3 3M256 8a6 5 0 0 1 12 0M296 8a6 5 0 0 1 12 0M336 8V5h16v3M376 8l8-3v3M424 3v5M602 8V4h4M610 4h6v4" />
          </svg>
        </TaskSlot>
        <TaskSlot $share={490} $bg="#00131c" />
        <TaskSlot $share={137} $bg="#2f3d46" />
        <TaskSlot $share={479} $bg="#000b1a"><Clock>11:33:35 星期四</Clock></TaskSlot>
      </TaskBar>

      <Toast role="status">
        <ToastGrip />
        <ToastTools>
          <button aria-label="固定提示"><PinSide /></button>
          <button aria-label="关闭提示"><XMark size={8} color="#2e2e40" weight={2.400} /></button>
        </ToastTools>
        <ToastTitle>操作提示</ToastTitle>
        <p>费用保存成功!</p>
      </Toast>

      <CustomsDialog />
      <Callout />
    </Screen>
  );
}
